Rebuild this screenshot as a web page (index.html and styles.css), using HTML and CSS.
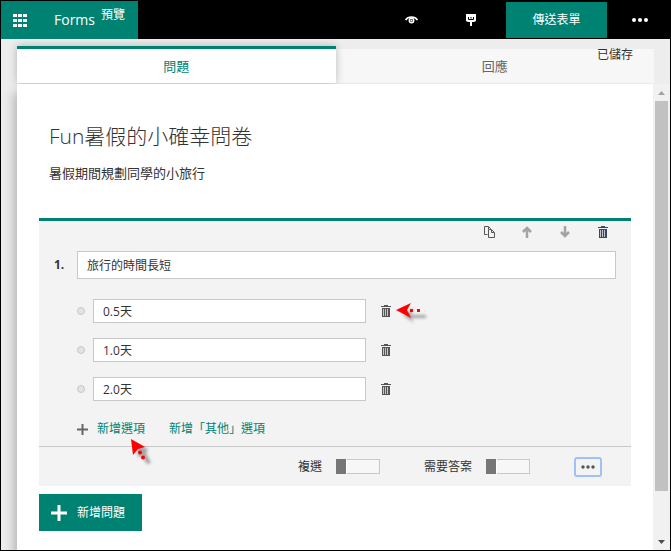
FILE: index.html
```html
<!DOCTYPE html>
<html lang="zh-Hant">
<head>
<meta charset="utf-8">
<title>Forms</title>
<link rel="stylesheet" href="styles.css">
</head>
<body>
<svg class="defs" aria-hidden="true">
  <symbol id="trash" viewBox="0 0 10 12"><path d="M3 0h4v1h3v1H0V1h3zM1 3h8v9H1z" fill="currentColor"/><path d="M2.500 4v7M4.500 4v7M6.500 4v7" stroke="#c3c6ca"/></symbol>
  <symbol id="up" viewBox="0 0 10 12"><path d="M5 12V2M1 6l4-4 4 4" fill="none" stroke="currentColor" stroke-width="2.500"/></symbol>
  <symbol id="pointer" viewBox="0 0 36 24"><path d="M3 10 14 3l-3 7h15v3H11l3 5z" fill="#555" opacity=".5" filter="url(#soft)" transform="translate(4 4)"/><path d="M0 9 15 2l-4 7 4 8z" fill="#f00"/><path d="M14 8h3v3h-3zM21 8h3v3h-3z" fill="#f00"/></symbol>
  <filter id="soft" x="-30%" y="-50%" width="160%" height="200%"><feGaussianBlur stdDeviation="1.600"/></filter>
</svg>
<header class="topbar">
  <div class="brand">
    <button class="launcher" aria-label="應用程式"><svg width="14" height="13" viewBox="0 0 14 13"><path d="M0 0h4v3H0zM5 0h4v3H5zM10 0h4v3h-4zM0 5h4v3H0zM5 5h4v3H5zM10 5h4v3h-4zM0 10h4v3H0zM5 10h4v3H5zM10 10h4v3h-4z" fill="#fff"/></svg></button>
    <a class="name" href="#">Forms <span class="beta">預覽</span></a>
  </div>
  <nav class="actions">
    <button aria-label="預覽"><svg width="13" height="8" viewBox="0 0 13 8"><path d="M.5 4C3 0 10 0 12.500 4" fill="none" stroke="#fff" stroke-width="1.500"/><circle cx="6.500" cy="4.500" r="2.200" fill="#000" stroke="#fff" stroke-width="1.500"/><circle cx="6.500" cy="4.500" r="1" fill="#fff"/></svg></button>
    <button aria-label="佈景主題"><svg width="10" height="12" viewBox="0 0 10 12"><path d="M0 0h10v7L8 8H6v4H4V8H2L0 7z" fill="#fff"/><path d="M2.500 3v2.500h5V3M5 3v1.500" fill="none" stroke="#000"/></svg></button>
    <button class="send">傳送表單</button>
    <button class="more" aria-label="更多"><svg width="16" height="4" viewBox="0 0 16 4" fill="#fff"><circle cx="2" cy="2" r="2"/><circle cx="8" cy="2" r="2"/><circle cx="14" cy="2" r="2"/></svg></button>
  </nav>
</header>
<div class="workspace">
  <span class="saved">已儲存</span>
  <div class="tabs">
    <button class="tab active">問題</button>
    <button class="tab">回應</button>
  </div>
  <div class="viewport">
    <main class="form">
      <h1>Fun暑假的小確幸問卷</h1>
      <p class="intro">暑假期間規劃同學的小旅行</p>
      <section class="card">
        <div class="tools">
          <button aria-label="複製"><svg width="11" height="12" viewBox="0 0 11 12"><path d="M3.500 8.500h-3v-8h4l2 2v1M4.500 3.500h3l3 3v5h-6zM7.500 4v2.500H10M4.500 1v2" fill="none" stroke="#555"/></svg></button>
          <button class="dim" aria-label="上移"><svg width="10" height="12"><use href="#up"/></svg></button>
          <button class="dim flip" aria-label="下移"><svg width="10" height="12"><use href="#up"/></svg></button>
          <button class="delete" aria-label="刪除問題"><svg width="10" height="12"><use href="#trash"/></svg></button>
        </div>
        <div class="question">
          <label for="q1">1.</label>
          <input id="q1" type="text" value="旅行的時間長短">
        </div>
        <div class="options">
          <div class="option">
            <input type="radio" disabled aria-label="選項 1">
            <input type="text" value="0.5天" aria-label="選項 1 文字">
            <button aria-label="刪除選項 1"><svg width="10" height="12"><use href="#trash"/></svg></button>
            <svg class="pointer side" width="36" height="24"><use href="#pointer"/></svg>
          </div>
          <div class="option">
            <input type="radio" disabled aria-label="選項 2">
            <input type="text" value="1.0天" aria-label="選項 2 文字">
            <button aria-label="刪除選項 2"><svg width="10" height="12"><use href="#trash"/></svg></button>
          </div>
          <div class="option">
            <input type="radio" disabled aria-label="選項 3">
            <input type="text" value="2.0天" aria-label="選項 3 文字">
            <button aria-label="刪除選項 3"><svg width="10" height="12"><use href="#trash"/></svg></button>
          </div>
        </div>
        <div class="links">
          <svg width="11" height="11" viewBox="0 0 11 11"><path d="M0 5.500h11M5.500 0v11" stroke="#666" stroke-width="2"/></svg>
          <a class="add" href="#">新增選項<svg class="pointer below" width="26" height="32" viewBox="0 0 26 32"><path d="M6 6l11 4-2 4 5 10-4 1-5-8-4 1z" fill="#555" opacity=".5" filter="url(#soft)"/><path d="M0 0 14 8 7 10 2 16z" fill="#f00"/><circle cx="9" cy="13.500" r="2" fill="#f00"/><circle cx="12" cy="18.500" r="2" fill="#f00"/></svg></a>
          <a href="#">新增「其他」選項</a>
        </div>
        <footer class="settings">
          <label>複選<input type="checkbox" role="switch"></label>
          <label>需要答案<input type="checkbox" role="switch"></label>
          <button aria-label="更多設定"><svg width="14" height="4" viewBox="0 0 14 4" fill="#555"><circle cx="2" cy="2" r="1.700"/><circle cx="7" cy="2" r="1.700"/><circle cx="12" cy="2" r="1.700"/></svg></button>
        </footer>
      </section>
      <button class="new"><svg width="16" height="16" viewBox="0 0 16 16"><path d="M0 8h16M8 0v16" stroke="#fff" stroke-width="3"/></svg>新增問題</button>
    </main>
    <div class="scrollbar" aria-hidden="true">
      <svg width="7" height="4" viewBox="0 0 7 4"><path d="M0 4 3.500 0 7 4z" fill="#a3a3a3"/></svg>
      <div class="track"><div class="thumb"></div></div>
      <svg width="7" height="4" viewBox="0 0 7 4"><path d="M0 0h7L3.500 4z" fill="#505050"/></svg>
    </div>
  </div>
</div>
</body>
</html>
```
FILE: styles.css
```css
* { box-sizing: border-box; }
body {
  margin: 0;
  min-height: 100vh;
  display: flex;
  flex-direction: column;
  border: 1px solid #000;
  background: #ededed;
  color: #333;
  font: 12px/16px "Open Sans", "Noto Sans CJK TC", sans-serif;
}
button, input { font: inherit; color: inherit; margin: 0; }
button {
  display: flex;
  align-items: center;
  justify-content: center;
  padding: 0;
  border: 0;
  background: none;
}
a { color: #008272; text-decoration: none; }
svg { display: block; flex: none; }
.defs { position: absolute; width: 0; height: 0; }

.topbar { display: flex; justify-content: space-between; height: 38px; background: #000; }
.brand { display: flex; width: 137px; background: #008272; }
.launcher { width: 38px; }
.name {
  display: flex;
  gap: 6px;
  padding: 10px 0 0 15px;
  color: #fff;
  font-size: 14px;
  line-height: 18px;
}
.beta { font-size: 12px; line-height: 8px; }
.actions { display: flex; color: #fff; }
.actions button { width: 60px; }
.actions .send { width: 101px; margin: 1px 0 1px 5px; background: #008272; }
.actions .more { width: 65px; margin-right: -2px; }

.workspace {
  position: relative;
  flex: 1;
  display: flex;
  flex-direction: column;
  padding: 7px 0 0 16px;
  overflow: hidden;
}
.saved { position: absolute; z-index: 2; top: 8px; right: 37px; }
.tabs { display: flex; align-items: flex-end; padding-right: 16px; margin-bottom: 1px; }
.tab { flex: 1; height: 34px; background: #f7f7f7; color: #666; font-size: 13px; }
.tab.active {
  position: relative;
  z-index: 1;
  height: 37px;
  border-top: 3px solid #008272;
  background: #fff;
  color: #008272;
  box-shadow: 0 0 8px rgba(0, 0, 0, .25);
}
.viewport { position: relative; z-index: 1; flex: 1; display: flex; }
.form {
  flex: 1;
  padding: 37px 22px 19px;
  background: #fff;
  box-shadow: -3px 8px 10px rgba(0, 0, 0, .25);
}
h1 { margin: 0 0 10px 10px; font-size: 21px; line-height: 30px; font-weight: 300; }
.intro { margin: 0 0 33px 10px; font-size: 13px; line-height: 24px; }

.card { border-top: 3px solid #008272; background: #f3f3f3; }
.tools { display: flex; justify-content: flex-end; padding: 4px 22px 0 0; gap: 26px; color: #444; }
.tools button { width: 12px; height: 14px; }
.dim { color: #a3a3a3; }
.flip svg { transform: rotate(180deg); }
.delete { color: #34495e; }
input[type="text"] { min-width: 0; border: 1px solid #c8c8c8; background: #fff; padding: 0 9px; }
.question { display: flex; align-items: center; padding: 12px 15px 0; }
.question label { width: 23px; font-weight: 700; }
.question input { flex: 1; height: 28px; }
.options { display: grid; gap: 15px; padding: 20px 38px 0; }
.option { display: flex; align-items: center; position: relative; }
.option input[type="radio"] {
  appearance: none;
  width: 8px;
  height: 8px;
  margin-right: 8px;
  border: 1px solid #c8c8c8;
  border-radius: 50%;
  background: #e3e3e3;
}
.option input[type="text"] { flex: 0 1 273px; height: 24px; }
.option button { width: 10px; margin-left: 15px; color: #555; }
.pointer { position: absolute; pointer-events: none; }
.pointer.side { left: 319px; top: 2px; }
.pointer.below { left: 34px; top: 18px; z-index: 2; }
.links { display: flex; align-items: center; padding: 20px 38px 9px; height: 45px; }
.links a { position: relative; margin-left: 24px; }
.links .add { margin-left: 9px; }

.settings {
  display: flex;
  align-items: center;
  justify-content: flex-end;
  height: 40px;
  padding-right: 29px;
  border-top: 1px solid #c8c8c8;
}
.settings label { display: flex; align-items: center; gap: 14px; margin-right: 44px; }
.settings input {
  appearance: none;
  width: 44px;
  height: 15px;
  border: 1px solid #c8c8c8;
  background: #f7f7f7;
}
.settings input::before {
  content: "";
  display: block;
  width: 10px;
  height: 15px;
  margin: -1px;
  border-right: 1px solid #fff;
  background: #767676;
}
.settings button { width: 28px; height: 20px; border: 2px solid #a0c0fa; border-radius: 3px; }
.new {
  gap: 10px;
  height: 37px;
  margin-top: 8px;
  padding: 0 17px 0 12px;
  background: #008272;
  color: #fff;
}

.scrollbar {
  position: relative;
  display: flex;
  flex-direction: column;
  align-items: center;
  width: 17px;
  padding: 7px 0 6px;
  background: #f1f1f1;
}
.track { flex: 1; display: flex; flex-direction: column; width: 13px; padding: 6px 0; }
.thumb { flex: 0 0 90%; background: #c1c1c1; }
```
